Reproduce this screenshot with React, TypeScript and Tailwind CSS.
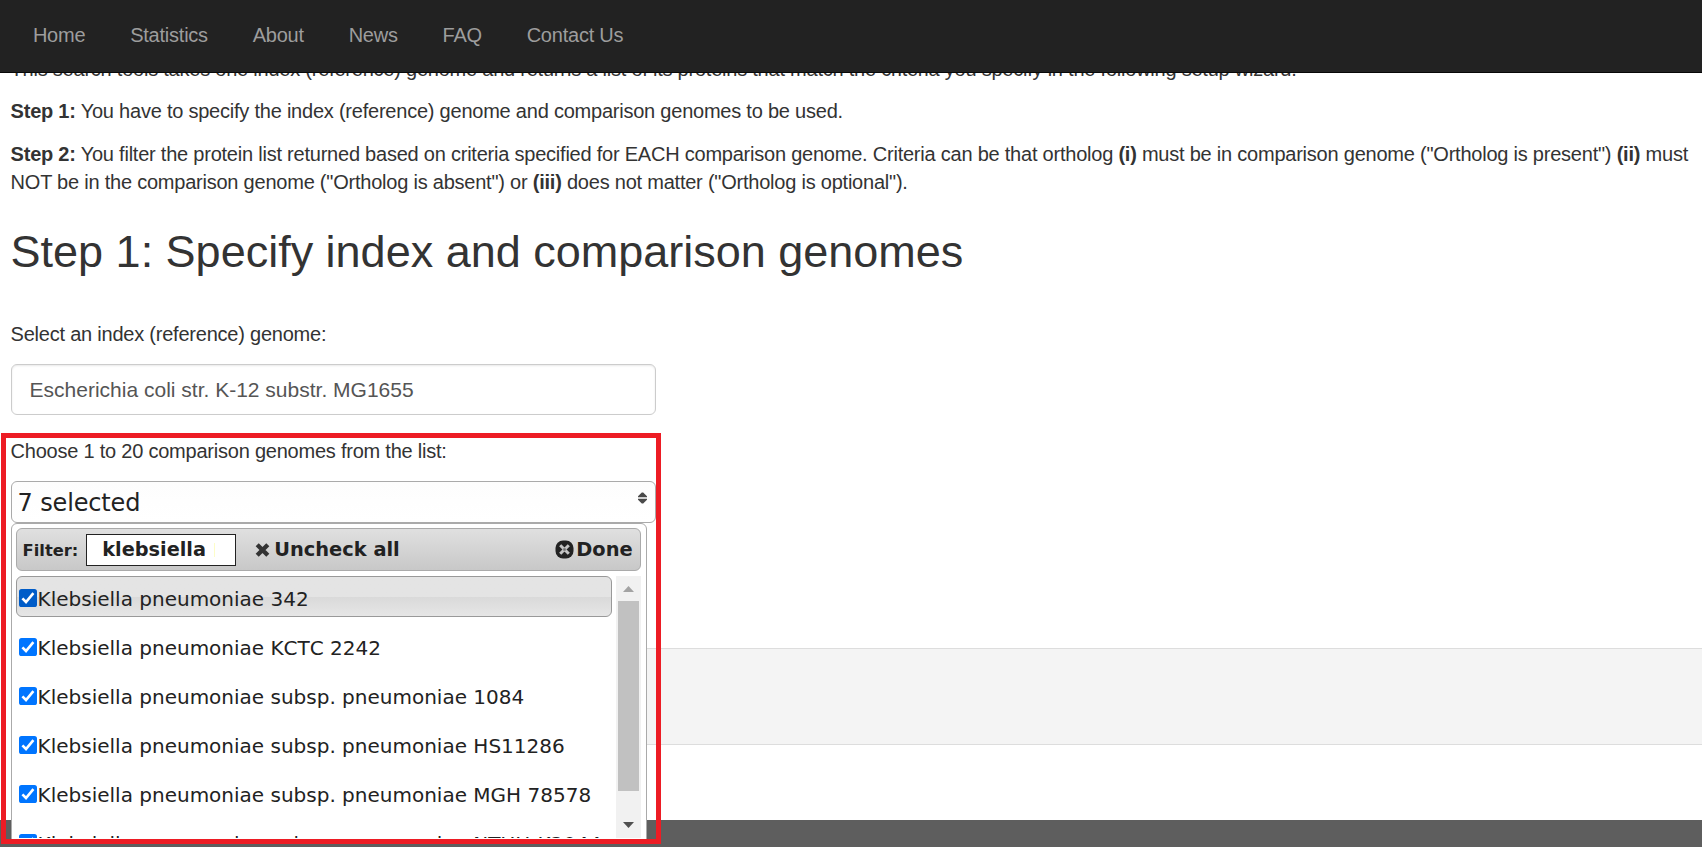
const navItems = ["Home", "Statistics", "About", "News", "FAQ", "Contact Us"];

const genomes = [
  "Klebsiella pneumoniae 342",
  "Klebsiella pneumoniae KCTC 2242",
  "Klebsiella pneumoniae subsp. pneumoniae 1084",
  "Klebsiella pneumoniae subsp. pneumoniae HS11286",
  "Klebsiella pneumoniae subsp. pneumoniae MGH 78578",
  "Klebsiella pneumoniae subsp. pneumoniae NTUH-K2044",
];

function Checkbox({ hovered }: { hovered: boolean }) {
  return (
    <svg className="mt-[12px] h-[18px] w-[18px] shrink-0" viewBox="0 0 18 18">
      <rect width="18" height="18" rx="2.6" fill={hovered ? "#005cc8" : "#0075ff"} />
      <path d="M3.4 9.4 L7 13 L14.4 4.2" fill="none" stroke="#fff" strokeWidth="2.6" />
    </svg>
  );
}

function SortIcon() {
  return (
    <svg className="h-[12px] w-[9px]" viewBox="0 0 9 12">
      <path d="M3.8 0.4 H5.2 L9 4.2 V5.2 H0 V4.2 Z M0 6.8 H9 V7.8 L5.2 11.6 H3.8 L0 7.8 Z" fill="#4a4a4a" />
    </svg>
  );
}

function CloseIcon() {
  return (
    <svg className="h-[14px] w-[15px]" viewBox="0 0 15 14">
      <path d="M2.2 1.8 L12.8 12.2 M12.8 1.8 L2.2 12.2" stroke="#333" strokeWidth="4.4" />
    </svg>
  );
}

function CircleCloseIcon() {
  return (
    <svg className="h-[19px] w-[19px]" viewBox="0 0 19 19">
      <rect x="0.5" y="0.5" width="18" height="18" rx="7.5" fill="#222" />
      <path d="M5.2 5.2 L13.8 13.8 M13.8 5.2 L5.2 13.8" stroke="#c4c4c4" strokeWidth="3" />
      <rect x="8.3" y="8.3" width="2.4" height="2.4" fill="#6b6b6b" />
    </svg>
  );
}

function Scrollbar() {
  return (
    <div className="flex h-[262px] w-[25px] flex-col items-center bg-[#f1f1f1]">
      <svg className="mt-[10px] h-[6px] w-[11px]" viewBox="0 0 11 6">
        <path d="M5.5 0 L11 6 H0 Z" fill="#a3a3a3" />
      </svg>
      <div className="mt-[9px] h-[190px] w-[21px] bg-[#c1c1c1]" />
      <svg className="mt-[31px] h-[6px] w-[11px]" viewBox="0 0 11 6">
        <path d="M0 0 H11 L5.5 6 Z" fill="#505050" />
      </svg>
    </div>
  );
}

function GenomeMenu() {
  return (
    <div className="absolute top-[42px] left-0 z-20 h-[319px] w-[636px] rounded-t-[6px] border border-[#aaa] bg-white px-[4px] pt-[4px] text-[#222]">
      <div className="flex h-[43px] w-[625px] items-center rounded-[6px] border border-[#aaa] bg-linear-to-b from-[#e0e0e0] to-[#c8c8c8] pr-[7px] pl-[6px] font-bold">
        <span className="mt-[3px] text-[16.3px] leading-[20px]">Filter:</span>
        <div className="ml-[8px] flex h-[32px] w-[150px] shrink-0 items-center border border-[#222] bg-white pl-[15px] text-[19.3px] leading-[24px] text-[#222]">
          <span>klebsiella</span>
          <span className="ml-[8px] h-[14px] w-px bg-[#fdfdc8]" />
        </div>
        <div className="ml-[19px] flex items-center text-[19.4px] leading-[24px]">
          <CloseIcon />
          <span className="ml-[4px]">Uncheck all</span>
        </div>
        <div className="ml-auto flex items-center text-[19.4px] leading-[24px]">
          <CircleCloseIcon />
          <span className="ml-[2px]">Done</span>
        </div>
      </div>
      <div className="mt-[5px] flex h-[262px] w-[625px] justify-between overflow-hidden">
        <ul className="flex w-[596px] flex-col gap-[8px]">
          {genomes.map((name, i) => (
            <li
              key={name}
              className={
                i === 0
                  ? "flex h-[41px] shrink-0 rounded-[6px] border border-[#999] bg-linear-to-b from-[#e4e4e4] from-50% via-[#d9d9d9] via-50% to-[#e6e6e6] pl-[2px]"
                  : "flex h-[41px] shrink-0 rounded-[6px] border border-transparent pl-[2px]"
              }
            >
              <Checkbox hovered={i === 0} />
              <span className="mt-[10px] ml-px whitespace-nowrap text-[20px] leading-[24px]">{name}</span>
            </li>
          ))}
        </ul>
        <Scrollbar />
      </div>
    </div>
  );
}

export default function App() {
  return (
    <div className="relative flex h-[847px] w-full flex-col overflow-hidden bg-white font-['Liberation_Sans',Arial,sans-serif] text-[20px] leading-[28px] tracking-[-0.225px] text-[#333]">
      <nav className="relative z-10 flex h-[73px] shrink-0 items-center border-b border-[#080808] bg-[#222] pl-[10.5px] text-[#9d9d9d]">
        {navItems.map((item) => (
          <a key={item} className="mt-[-3px] px-[22.4px]">
            {item}
          </a>
        ))}
      </nav>

      <main className="mt-[-18px] flex h-[765px] shrink-0 flex-col pl-[10.6px]">
        <p className="whitespace-nowrap">
          This search tools takes one index (reference) genome and returns a list of its proteins that match the
          criteria you specify in the following setup wizard.
        </p>
        <p className="mt-[14px]">
          <b>Step 1:</b> You have to specify the index (reference) genome and comparison genomes to be used.
        </p>
        <p className="mt-[15px] whitespace-nowrap">
          <b>Step 2:</b> You filter the protein list returned based on criteria specified for EACH comparison genome.
          Criteria can be that ortholog <b>(i)</b> must be in comparison genome ("Ortholog is present") <b>(ii)</b>{" "}
          must
          <br />
          NOT be in the comparison genome ("Ortholog is absent") or <b>(iii)</b> does not matter ("Ortholog is
          optional").
        </p>
        <h1 className="mt-[31px] text-[45px] leading-[50px] tracking-[-0.01px]">
          Step 1: Specify index and comparison genomes
        </h1>

        <label className="mt-[43px]">Select an index (reference) genome:</label>
        <div className="mt-[16px] flex h-[51px] w-[645px] shrink-0 items-center rounded-[6px] border border-[#ccc] pl-[18px] text-[21px] tracking-normal text-[#555] shadow-[inset_0_1px_2px_rgba(0,0,0,0.09)]">
          Escherichia coli str. K-12 substr. MG1655
        </div>

        <label className="mt-[22px]">Choose 1 to 20 comparison genomes from the list:</label>
        <div className="relative mt-[16px] h-[42px] w-[645px] shrink-0 font-['DejaVu_Sans',Verdana,sans-serif] tracking-normal [font-kerning:none]">
          <div className="flex h-[42px] justify-between rounded-[6px] border border-[#aaa] bg-linear-to-b from-[#fdfdfd] to-white pr-[8px] pl-[6px] text-[#222]">
            <span className="mt-[7px] text-[24px] leading-[28px] tracking-[-0.15px]">7 selected</span>
            <span className="mt-[10px]">
              <SortIcon />
            </span>
          </div>
          <GenomeMenu />
        </div>

        <div className="mt-[125px] h-[97px] shrink-0 border-y border-[#ddd] bg-[#f4f4f4]" />
      </main>

      <footer className="h-[27px] shrink-0 bg-[#5e5e5e]" />

      <div className="absolute top-[433px] left-[1px] z-30 h-[411px] w-[660px] border-[5px] border-[#ed1c24]" />
    </div>
  );
}
